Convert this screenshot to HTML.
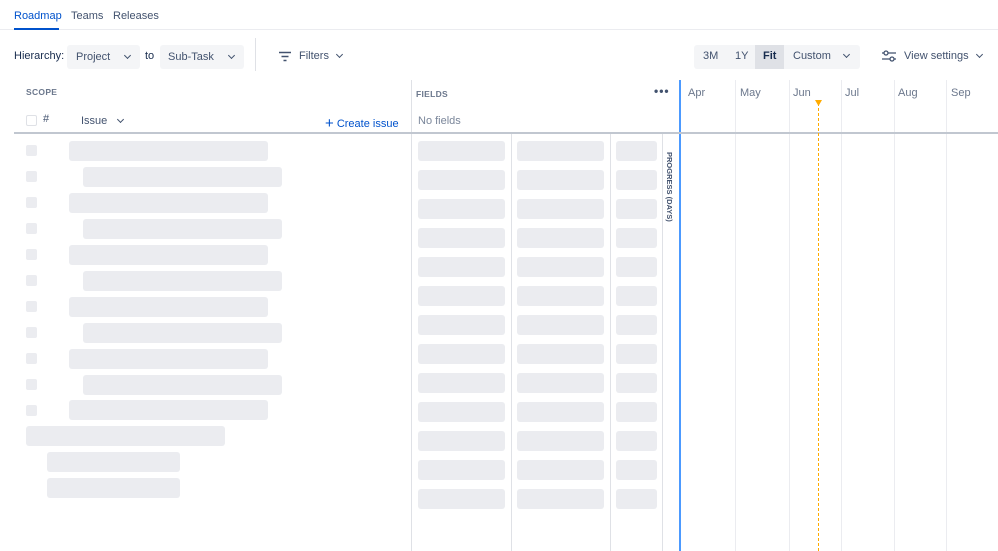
<!DOCTYPE html>
<html><head><meta charset="utf-8"><style>
*{margin:0;padding:0;box-sizing:border-box}
body{width:998px;height:551px;overflow:hidden;background:#fff;font-family:"Liberation Sans",sans-serif;color:#42526e;position:relative}
.a{position:absolute}
.sk{position:absolute;background:#ebecf0;border-radius:3px}
.cb{position:absolute;width:11px;height:11px;background:#ebecf0;border-radius:2px;left:26px}
.vl{position:absolute;width:1px;background:#dfe1e6}
.t{position:absolute;font-size:11px;white-space:nowrap}
.btn{position:absolute;background:#f4f5f7;border-radius:3px;height:24px;font-size:11px;line-height:24px;color:#42526e}
.chev{display:inline-block;width:5px;height:5px;border-right:1.5px solid #42526e;border-bottom:1.5px solid #42526e;transform:rotate(45deg);position:relative;top:-2px}
.m{position:absolute;top:87px;font-size:11px;color:#6b778c}
.lbl{position:absolute;font-size:8.5px;font-weight:bold;color:#6b778c;letter-spacing:0.3px}
</style></head><body>
<div class="t" style="left:14px;top:10px;color:#0052cc">Roadmap</div>
<div class="t" style="left:71px;top:10px;color:#42526e">Teams</div>
<div class="t" style="left:113px;top:10px;color:#42526e">Releases</div>
<div class="a" style="left:0;top:29px;width:998px;height:1px;background:#ebecf0"></div>
<div class="a" style="left:14px;top:28px;width:45px;height:2px;background:#0052cc"></div>

<div class="t" style="left:14px;top:50px;color:#172b4d">Hierarchy:</div>
<div class="btn" style="left:67px;top:45px;width:73px;padding-left:9px">Project <span class="chev" style="margin-left:12px"></span></div>
<div class="t" style="left:145px;top:50px;color:#172b4d">to</div>
<div class="btn" style="left:160px;top:45px;width:84px;padding-left:8px">Sub-Task <span class="chev" style="margin-left:12px"></span></div>
<div class="a" style="left:255px;top:38px;width:1px;height:33px;background:#dfe1e6"></div>
<svg class="a" style="left:278px;top:51px" width="14" height="11"><path d="M1 1.5h12M3.5 5.5h7M5.5 9.5h3" stroke="#42526e" stroke-width="1.5"/></svg>
<div class="t" style="left:299px;top:50px">Filters <span class="chev" style="margin-left:5px"></span></div>

<div class="btn" style="left:694px;top:45px;width:166px"></div>
<div class="t" style="left:703px;top:50px">3M</div>
<div class="t" style="left:735px;top:50px">1Y</div>
<div class="a" style="left:755px;top:45px;width:29px;height:24px;background:#dfe1e6"></div>
<div class="t" style="left:763px;top:50px;font-weight:bold;color:#172b4d">Fit</div>
<div class="t" style="left:793px;top:50px">Custom <span class="chev" style="margin-left:10px"></span></div>
<svg class="a" style="left:882px;top:50px" width="14" height="12"><path d="M0 3h14M0 9h14" stroke="#42526e" stroke-width="1.3"/><circle cx="4" cy="3" r="2" fill="#fff" stroke="#42526e" stroke-width="1.3"/><circle cx="10" cy="9" r="2" fill="#fff" stroke="#42526e" stroke-width="1.3"/></svg>
<div class="t" style="left:904px;top:50px">View settings <span class="chev" style="margin-left:5px"></span></div>

<div class="lbl" style="left:26px;top:87px">SCOPE</div>
<div class="a" style="left:26px;top:115px;width:11px;height:11px;border:1.5px solid #dfe1e6;border-radius:2px"></div>
<div class="t" style="left:43px;top:113px;font-size:11px">#</div>
<div class="t" style="left:81px;top:115px">Issue <span class="chev" style="margin-left:8px"></span></div>
<div class="t" style="left:325px;top:114px;color:#0052cc"><span style="font-size:15px;position:relative;top:1px">+</span> Create issue</div>
<div class="lbl" style="left:416px;top:89px">FIELDS</div>
<div class="t" style="left:654px;top:84px;font-size:12px;font-weight:bold;color:#42526e;letter-spacing:1px">•••</div>
<div class="t" style="left:418px;top:115px;color:#7a869a">No fields</div>
<div class="m" style="left:688px">Apr</div><div class="m" style="left:740px">May</div><div class="m" style="left:793px">Jun</div><div class="m" style="left:845px">Jul</div><div class="m" style="left:898px">Aug</div><div class="m" style="left:951px">Sep</div>

<div class="vl" style="left:411px;top:80px;height:471px"></div>
<div class="vl" style="left:511px;top:134px;height:417px"></div>
<div class="vl" style="left:610px;top:134px;height:417px"></div>
<div class="vl" style="left:662px;top:134px;height:417px"></div>
<div class="vl" style="left:735px;top:80px;height:471px;background:#ebecf0"></div>
<div class="vl" style="left:789px;top:80px;height:471px;background:#ebecf0"></div>
<div class="vl" style="left:841px;top:80px;height:471px;background:#ebecf0"></div>
<div class="vl" style="left:894px;top:80px;height:471px;background:#ebecf0"></div>
<div class="vl" style="left:946px;top:80px;height:471px;background:#ebecf0"></div>
<div class="a" style="left:679px;top:80px;width:2px;height:471px;background:#4c9aff"></div>
<div class="a" style="left:14px;top:132px;width:984px;height:2px;background:#c1c7d0"></div>
<div class="a" style="left:818px;top:103px;width:0;height:448px;border-left:1px dashed #ffab00"></div>
<svg class="a" style="left:815px;top:100px" width="7" height="6"><path d="M0 0h7L3.5 6z" fill="#ffab00"/></svg>
<div class="t" style="left:665px;top:152px;font-size:7.5px;font-weight:bold;color:#42526e;writing-mode:vertical-rl">PROGRESS (DAYS)</div>

<div class="cb" style="top:145px"></div><div class="sk" style="left:69px;top:141px;width:199px;height:20px"></div>
<div class="cb" style="top:171px"></div><div class="sk" style="left:83px;top:167px;width:199px;height:20px"></div>
<div class="cb" style="top:197px"></div><div class="sk" style="left:69px;top:193px;width:199px;height:20px"></div>
<div class="cb" style="top:223px"></div><div class="sk" style="left:83px;top:219px;width:199px;height:20px"></div>
<div class="cb" style="top:249px"></div><div class="sk" style="left:69px;top:245px;width:199px;height:20px"></div>
<div class="cb" style="top:275px"></div><div class="sk" style="left:83px;top:271px;width:199px;height:20px"></div>
<div class="cb" style="top:301px"></div><div class="sk" style="left:69px;top:297px;width:199px;height:20px"></div>
<div class="cb" style="top:327px"></div><div class="sk" style="left:83px;top:323px;width:199px;height:20px"></div>
<div class="cb" style="top:353px"></div><div class="sk" style="left:69px;top:349px;width:199px;height:20px"></div>
<div class="cb" style="top:379px"></div><div class="sk" style="left:83px;top:375px;width:199px;height:20px"></div>
<div class="cb" style="top:405px"></div><div class="sk" style="left:69px;top:400px;width:199px;height:20px"></div>
<div class="sk" style="left:26px;top:426px;width:199px;height:20px"></div>
<div class="sk" style="left:47px;top:452px;width:133px;height:20px"></div>
<div class="sk" style="left:47px;top:478px;width:133px;height:20px"></div>

<div class="sk" style="left:418px;top:141px;width:87px;height:20px"></div><div class="sk" style="left:517px;top:141px;width:87px;height:20px"></div><div class="sk" style="left:616px;top:141px;width:41px;height:20px"></div>
<div class="sk" style="left:418px;top:170px;width:87px;height:20px"></div><div class="sk" style="left:517px;top:170px;width:87px;height:20px"></div><div class="sk" style="left:616px;top:170px;width:41px;height:20px"></div>
<div class="sk" style="left:418px;top:199px;width:87px;height:20px"></div><div class="sk" style="left:517px;top:199px;width:87px;height:20px"></div><div class="sk" style="left:616px;top:199px;width:41px;height:20px"></div>
<div class="sk" style="left:418px;top:228px;width:87px;height:20px"></div><div class="sk" style="left:517px;top:228px;width:87px;height:20px"></div><div class="sk" style="left:616px;top:228px;width:41px;height:20px"></div>
<div class="sk" style="left:418px;top:257px;width:87px;height:20px"></div><div class="sk" style="left:517px;top:257px;width:87px;height:20px"></div><div class="sk" style="left:616px;top:257px;width:41px;height:20px"></div>
<div class="sk" style="left:418px;top:286px;width:87px;height:20px"></div><div class="sk" style="left:517px;top:286px;width:87px;height:20px"></div><div class="sk" style="left:616px;top:286px;width:41px;height:20px"></div>
<div class="sk" style="left:418px;top:315px;width:87px;height:20px"></div><div class="sk" style="left:517px;top:315px;width:87px;height:20px"></div><div class="sk" style="left:616px;top:315px;width:41px;height:20px"></div>
<div class="sk" style="left:418px;top:344px;width:87px;height:20px"></div><div class="sk" style="left:517px;top:344px;width:87px;height:20px"></div><div class="sk" style="left:616px;top:344px;width:41px;height:20px"></div>
<div class="sk" style="left:418px;top:373px;width:87px;height:20px"></div><div class="sk" style="left:517px;top:373px;width:87px;height:20px"></div><div class="sk" style="left:616px;top:373px;width:41px;height:20px"></div>
<div class="sk" style="left:418px;top:402px;width:87px;height:20px"></div><div class="sk" style="left:517px;top:402px;width:87px;height:20px"></div><div class="sk" style="left:616px;top:402px;width:41px;height:20px"></div>
<div class="sk" style="left:418px;top:431px;width:87px;height:20px"></div><div class="sk" style="left:517px;top:431px;width:87px;height:20px"></div><div class="sk" style="left:616px;top:431px;width:41px;height:20px"></div>
<div class="sk" style="left:418px;top:460px;width:87px;height:20px"></div><div class="sk" style="left:517px;top:460px;width:87px;height:20px"></div><div class="sk" style="left:616px;top:460px;width:41px;height:20px"></div>
<div class="sk" style="left:418px;top:489px;width:87px;height:20px"></div><div class="sk" style="left:517px;top:489px;width:87px;height:20px"></div><div class="sk" style="left:616px;top:489px;width:41px;height:20px"></div>
</body></html>
